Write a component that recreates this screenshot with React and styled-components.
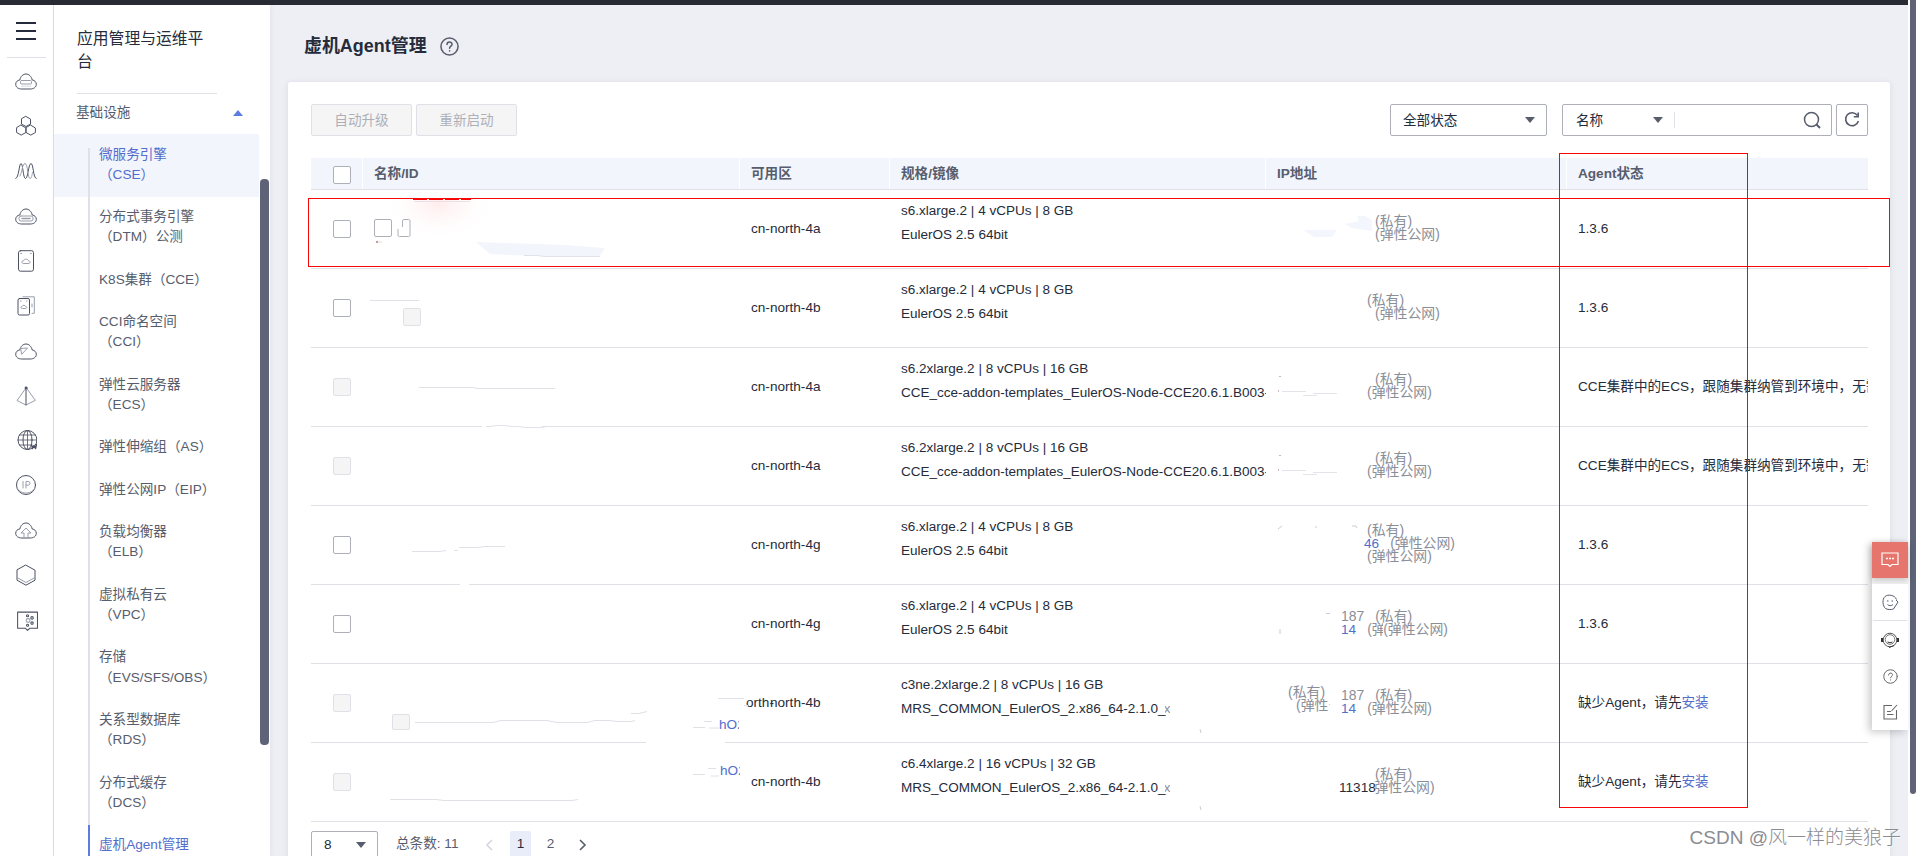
import React from "react";
import styled, { createGlobalStyle, css } from "styled-components";

const GlobalStyle = createGlobalStyle`
  * { box-sizing: border-box; }
  body {
    margin: 0;
    overflow: hidden;
    font-family: "Liberation Sans", "Noto Sans CJK SC", sans-serif;
    font-size: 13.6px;
    color: #252b3a;
  }
`;

/* ---------- shell ---------- */
const Screen = styled.div`
  display: flex;
  width: 1916px;
  height: 856px;
  overflow: hidden;
  background: #fff;
`;
const Frame = styled.div`
  position: relative;
  display: flex;
  flex-direction: column;
  width: 1908px;
  height: 856px;
`;
const TopBar = styled.header`
  flex: none;
  height: 5px;
  background: #282b33;
`;
const Body = styled.div`
  display: flex;
  flex: 1;
  min-height: 0;
`;
const PageScroll = styled.div`
  width: 8px;
  padding-left: 2px;
`;
const PageThumb = styled.div`
  height: 794px;
  background: #5e6378;
  border-radius: 0 0 4px 4px;
`;

/* ---------- icon rail ---------- */
const Rail = styled.nav`
  width: 54px;
  flex: none;
  border-right: 1px solid #dfe1e6;
  background: #fff;
  display: flex;
  flex-direction: column;
`;
const MenuButton = styled.div`
  height: 53px;
  margin: 0 7px;
  padding: 17px 0 0 9px;
  border-bottom: 1px solid #dfe1e6;
  svg { display: block; }
`;
const RailItem = styled.div`
  height: 44.95px;
  display: flex;
  align-items: center;
  justify-content: center;
  padding-right: 1px;
  svg { display: block; }
`;
const RailList = styled.div`
  padding-top: 0.5px;
`;

/* ---------- side navigation ---------- */
const Side = styled.aside`
  position: relative;
  z-index: 1;
  width: 216px;
  flex: none;
  display: flex;
  background: #fff;
  box-shadow: 1px 0 5px rgba(60, 70, 100, 0.07);
`;
const SideMain = styled.div`
  width: 205px;
  height: 851px;
  overflow: hidden;
`;
const SideTitle = styled.h2`
  margin: 0 42px 0 23px;
  padding: 23px 0 0;
  height: 89px;
  font-size: 15.8px;
  font-weight: 400;
  line-height: 22.5px;
  border-bottom: 1px solid #dfe1e6;
`;
const Group = styled.div`
  height: 40px;
  padding: 0 16px 3px 22px;
  display: flex;
  align-items: center;
  justify-content: space-between;
  color: #575d6c;
`;
const GroupName = styled.span`
  padding-bottom: 4px;
`;
const CaretUp = styled.i`
  border: 5px solid transparent;
  border-top: 0;
  border-bottom: 6px solid #5e7ce0;
`;
const NavItem = styled.div`
  padding: 0 0 0 34px;
  background: ${(p) => (p.$hover ? "#f2f5fc" : "transparent")};
  color: ${(p) => (p.$hover || p.$current ? "#526ecc" : "#575d6c")};
`;
const NavLabel = styled.div`
  position: relative;
  padding: 10.6px 0 11.7px 9px;
  border-left: 2px solid ${(p) => (p.$current ? "#5e7ce0" : "#dfe1e6")};
  line-height: 20.15px;
  white-space: pre;
  ${(p) =>
    p.$first &&
    css`
      border-left-color: transparent;
      border-image: linear-gradient(transparent 14px, #dfe1e6 14px) 1;
    `}
`;
const SideScroll = styled.div`
  width: 11px;
  padding: 174px 1px 0;
`;
const SideThumb = styled.div`
  height: 566px;
  border-radius: 4px;
  background: #5e6378;
`;

/* ---------- content ---------- */
const Content = styled.main`
  flex: 1;
  background: #eeeff5;
  padding: 0 18px;
`;
const PageHead = styled.div`
  height: 77px;
  display: flex;
  align-items: center;
  gap: 13.5px;
  padding: 5px 0 0 16px;
`;
const PageTitle = styled.h1`
  margin: 0;
  font-size: 17.95px;
  line-height: 26px;
  font-weight: 700;
`;
const Card = styled.section`
  position: relative;
  height: 800px;
  padding: 22px 22px 0 23px;
  background: #fff;
  border-radius: 3px;
  box-shadow: 0 1px 6px rgba(40, 50, 80, 0.1);
`;
const Toolbar = styled.div`
  display: flex;
  height: 32px;
`;
const DisabledButton = styled.button`
  width: 101px;
  height: 32px;
  margin-right: 4px;
  padding: 0 0 2px;
  border: 1px solid #dfe1e6;
  border-radius: 2px;
  background: #f5f5f6;
  color: #adb0b8;
  font: inherit;
`;
const Spacer = styled.div`
  flex: 1;
`;
const SelectBox = styled.div`
  width: ${(p) => p.$w}px;
  height: 32px;
  padding: 0 11px 0 12px;
  display: flex;
  align-items: center;
  justify-content: space-between;
  border: 1px solid #adb0b8;
  border-radius: 2px;
`;
const SelectText = styled.span`
  padding-bottom: 2px;
`;
const SearchBox = styled.div`
  display: flex;
  align-items: center;
  width: 270px;
  height: 32px;
  margin: 0 4px 0 15px;
  padding: 0 10px 0 13px;
  border: 1px solid #adb0b8;
  border-radius: 2px;
`;
const SearchField = styled.div`
  display: flex;
  justify-content: space-between;
  align-items: center;
  width: 99px;
  height: 16px;
  padding-right: 11px;
  border-right: 1px solid #dfe1e6;
`;
const IconButton = styled.div`
  width: 32px;
  height: 32px;
  display: flex;
  align-items: center;
  justify-content: center;
  border: 1px solid #adb0b8;
  border-radius: 2px;
`;
const Caret = styled.i`
  border: 5px solid transparent;
  border-bottom: 0;
  border-top: 6px solid #575d6c;
`;

/* ---------- table ---------- */
const columns = "52px 377px 150px 376px 301px 301px";
const Table = styled.div`
  position: relative;
  margin-top: 22px;
`;
const HeadRow = styled.div`
  display: grid;
  grid-template-columns: ${columns};
  height: 32px;
  background: #f2f5fc;
  border-bottom: 1px solid #dfe1e6;
`;
const HeadCell = styled.div`
  padding: 0 0 0 11px;
  border-right: ${(p) => (p.$last ? 0 : 1)}px solid #fff;
  line-height: 31px;
  font-weight: 700;
  color: #575d6c;
`;
const CheckCell = styled.div`
  display: flex;
  align-items: center;
  padding-left: 22px;
  border-right: ${(p) => (p.$head ? "1px solid #fff" : "0")};
  padding-top: ${(p) => (p.$head ? 2 : 0)}px;
`;
const Checkbox = styled.span`
  flex: none;
  width: 18px;
  height: 18px;
  border: 1px solid ${(p) => (p.$off ? "#dfe1e6" : "#adb0b8")};
  border-radius: 2px;
  background: ${(p) => (p.$off ? "#f5f5f6" : "#fff")};
`;
const Row = styled.div`
  display: grid;
  grid-template-columns: ${columns};
  height: 79px;
  border-bottom: 1px solid #dfe1e6;
`;
const Cell = styled.div`
  min-width: 0;
  overflow: hidden;
  padding-left: 11px;
  line-height: 77px;
  white-space: nowrap;
`;
const ZoneCell = styled(Cell)`
  overflow: visible;
`;
const ZoneLead = styled.span`
  margin: 0 -4px 0 -5px;
`;
const NameCell = styled(Cell)`
  display: flex;
  justify-content: flex-end;
  padding-right: ${(p) => p.$right}px;
`;
const NameFragment = styled.span`
  width: 20px;
  overflow: hidden;
  height: 20px;
  margin-top: ${(p) => p.$top}px;
  line-height: 20px;
  color: #526ecc;
`;
const SpecCell = styled(Cell)`
  padding-top: 8.5px;
  line-height: 24px;
  font-size: 13.52px;
`;
const ClippedGlyph = styled.span`
  display: inline-block;
  width: 5px;
  height: 14px;
  line-height: 14px;
  overflow: hidden;
  vertical-align: middle;
  direction: rtl;
  color: #8a8e99;
`;
const IpCell = styled.div`
  position: relative;
  padding-top: ${(p) => (p.$lines > 2 ? 18 : 25)}px;
  color: #8a8e99;
`;
const IpLine = styled.div`
  display: flex;
  height: 13px;
  line-height: 13px;
  white-space: pre;
`;
const IpPart = styled.span`
  margin-left: ${(p) => p.$ml || 0}px;
  font-size: ${(p) => (p.$tone ? 13.6 : 13.9)}px;
  color: ${(p) => (p.$tone === "link" ? "#526ecc" : p.$tone === "dark" ? "#252b3a" : "#8a8e99")};
  ${(p) => p.$w && css`width: ${p.$w}px; overflow: hidden; height: 16px;`}
  ${(p) => p.$clipLeft && css`clip-path: inset(-2px -2px -2px 5px);`}
`;
const IpExtra = styled.div`
  position: absolute;
  left: 22px;
  top: 22px;
`;
const Install = styled.a`
  color: #526ecc;
`;
const Traces = styled.svg`
  position: absolute;
  left: 0;
  top: 0;
  pointer-events: none;
`;

/* ---------- pagination ---------- */
const Pager = styled.div`
  display: flex;
  margin-top: 9px;
  height: 26px;
  line-height: 26px;
  color: #575d6c;
`;
const PageSize = styled.div`
  display: flex;
  align-items: center;
  justify-content: space-between;
  width: 67px;
  height: 28px;
  padding: 0 11px 0 12px;
  border: 1px solid #adb0b8;
  border-radius: 2px;
  color: #252b3a;
`;
const Total = styled.span`
  margin-left: 18px;
  width: 81px;
`;
const PageNo = styled.span`
  width: 21px;
  margin-left: ${(p) => p.$ml}px;
  border-radius: 2px;
  text-align: center;
  background: ${(p) => (p.$on ? "#e9edfa" : "transparent")};
  color: ${(p) => (p.$on ? "#252b3a" : "#575d6c")};
`;
const Chevron = styled.svg`
  margin: 8px 0 0 ${(p) => p.$ml}px;
`;

/* ---------- overlays ---------- */
const Marker = styled.div`
  position: absolute;
  left: ${(p) => p.$x}px;
  top: ${(p) => p.$y}px;
  width: ${(p) => p.$w}px;
  height: ${(p) => p.$h}px;
  border: 1px solid #f80606;
  z-index: 2;
`;
const FloatBar = styled.div`
  position: absolute;
  right: 0;
  top: 542px;
  width: 36px;
  z-index: 3;
  box-shadow: -3px 2px 8px rgba(0, 0, 0, 0.22);
  background: #f1f1f2;
`;
const FloatChat = styled.div`
  height: 36px;
  margin-bottom: 6px;
  display: flex;
  align-items: center;
  justify-content: center;
  background: #e6766d;
  box-shadow: 0 2px 6px rgba(0, 0, 0, 0.18);
`;
const FloatList = styled.div`
  position: relative;
  height: 146px;
  padding: 0 1px;
  background: #fff;
`;
const FloatItem = styled.div`
  height: 36px;
  display: flex;
  align-items: center;
  justify-content: center;
  border-bottom: ${(p) => (p.$line ? "1px solid #dfe1e6" : "0")};
  ${(p) => p.$line && css`height: 37px; margin-bottom: 1px;`}
`;
const Watermark = styled.div`
  position: absolute;
  right: 7px;
  top: 823px;
  z-index: 4;
  font-size: 19px;
  line-height: 30px;
  font-weight: 300;
  white-space: nowrap;
  color: #8b8c91;
  text-shadow: 1px 1px 0 rgba(255, 255, 255, 0.7);
`;

/* ---------- icons ---------- */
const CLOUD = "M6.500 19C3 19 .7 17 .7 14.300c0-2.400 1.700-4 4.100-4.300C5.500 6.500 8 4 11 4s5.500 2.500 6.200 6c2.400.3 4.100 1.900 4.100 4.300 0 2.700-2.300 4.700-5.800 4.700z";
function Ico({ children, size = 22, color = "#4b5162", sw = 1 }) {
  return (
    <svg width={size} height={size} viewBox="0 0 22 22" fill="none" stroke={color} strokeWidth={sw} strokeLinejoin="round" strokeLinecap="round">
      {children}
    </svg>
  );
}
const faint = "#9a9eab";
const railIcons = [
  <Ico><path d={CLOUD} /><rect x="5.500" y="10.500" width="11" height="3.500" rx="1" stroke={faint} /><path d="M6 15.500h10v1.500H6z" stroke="none" fill="#e4e5ea" /></Ico>,
  <Ico><path d="M11 1.500l4.500 2.600v5L11 11.500 6.500 9.100v-5z" /><path d="M6.200 10.200L10.900 13v4.500l-4.700 2.600L1.600 17.500V13z" /><path d="M15.800 10.200l4.600 2.800v4.500l-4.600 2.600-4.800-2.600V13z" /></Ico>,
  <Ico><path d="M.8 18.500C4 18 4 3.500 6 3.500S8 18.500 10.500 18.500 13.500 3.500 16 3.500 18 18 21.200 18.500" /><path d="M5 16C7 12 7.500 3.500 10 3.500c3 0 2.500 15 5 15 1.500 0 2-3 2.500-6" stroke={faint} /></Ico>,
  <Ico><path d={CLOUD} /><rect x="4" y="11" width="14" height="5" rx="2" stroke={faint} /><path d="M7 13.500h8" stroke={faint} strokeWidth={1.5} /></Ico>,
  <Ico><rect x="3.500" y=".7" width="15" height="20.500" rx="2" /><path d="M8.500 13.500c-3-.2-1.500-3.200 0-2.700.8-2.200 4.500-2.200 5 0 2 0 2.500 2.700 0 2.700z" stroke={faint} /><path d="M6 3.500h.2M15.800 3.500h.2" sw={2} /></Ico>,
  <Ico><rect x="3" y="3.500" width="11.500" height="16.500" rx="1.500" /><path d="M8 1.800h11.300v16.500H17" stroke={faint} /><path d="M7 13.500c-2-.2-1-2.300 0-2 .6-1.600 3.200-1.600 3.600 0 1.500 0 1.700 2 0 2zM5.500 6h.6M11.500 6h.6M17 9v3" stroke={faint} /></Ico>,
  <Ico><path d={CLOUD} /><path d="M6 8.500l6.500-.5-5.500 6z" stroke={faint} /></Ico>,
  <Ico><path d="M11 3L2 15.500l9 4.500 9-4.500z" stroke={faint} /><path d="M11 2v18" /><circle cx="11" cy="3" r="1" fill="#4b5162" /></Ico>,
  <Ico><g transform="translate(1.500 0)"><circle cx="11" cy="11" r="9.500" /><ellipse cx="11" cy="11" rx="4.500" ry="9.500" /><path d="M1.500 11h19M11 1.500v19M3 6h16M3 16h11" strokeWidth=".8" /><path d="M15 15.500l1 4 1.500-3 1.500 3 1-4" strokeWidth={1.4} /></g></Ico>,
  <Ico><circle cx="11" cy="11" r="9.500" /><path d="M4 16.500c4 3.500 10 3.500 14 0" stroke={faint} /><path d="M8 7.500v6.500M11 14V7.500h2.200a1.800 1.800 0 010 3.600H11" stroke={faint} /></Ico>,
  <Ico><path d={CLOUD} /><path d="M9 18.500v-4.500H6L11 9l5 5h-3v4.500" stroke={faint} /></Ico>,
  <Ico><path d="M11 1.200l9 5v10l-9 5-9-5v-10z" /><path d="M2 13.500l9 5 9-5" stroke={faint} /></Ico>,
  <Ico size={23}><path d="M2.500 3h19v15.500h-7.500l-2 2-2-2H2.500z" /><circle cx="12.500" cy="11" r="1.800" stroke={faint} /><circle cx="12" cy="6.500" r="1" /><circle cx="12" cy="15.500" r="1" /><circle cx="16.300" cy="8.500" r="1.200" /><circle cx="16.300" cy="13.500" r="1.200" /></Ico>,
];

function HelpIcon({ size, color, sw }) {
  return (
    <svg width={size} height={size} viewBox="0 0 20 20" fill="none" stroke={color} strokeWidth={sw} strokeLinecap="round">
      <circle cx="10" cy="10" r="9" />
      <path d="M7.400 8c0-3.600 5.300-3.400 5.300-.3 0 1.900-2.600 2-2.600 4.100M10.100 14.500v.2" />
    </svg>
  );
}

/* ---------- data ---------- */
const nav = [
  "微服务引擎\n（CSE）",
  "分布式事务引擎\n（DTM）公测",
  "K8S集群（CCE）",
  "CCI命名空间\n（CCI）",
  "弹性云服务器\n（ECS）",
  "弹性伸缩组（AS）",
  "弹性公网IP（EIP）",
  "负载均衡器\n（ELB）",
  "虚拟私有云\n（VPC）",
  "存储\n（EVS/SFS/OBS）",
  "关系型数据库\n（RDS）",
  "分布式缓存\n（DCS）",
  "虚机Agent管理",
];

const PRIV = "(私有)";
const EIP = "(弹性公网)";
const managed = "CCE集群中的ECS，跟随集群纳管到环境中，无需安装";
const missing = <>缺少Agent，请先<Install>安装</Install></>;
const cceImage = "CCE_cce-addon-templates_EulerOS-Node-CCE20.6.1.B003-x86";

const rows = [
  { zone: "cn-north-4a", spec: "s6.xlarge.2 | 4 vCPUs | 8 GB", image: "EulerOS 2.5 64bit", status: "1.3.6",
    ip: [[{ t: PRIV, ml: 109 }], [{ t: EIP, ml: 109 }]] },
  { zone: "cn-north-4b", spec: "s6.xlarge.2 | 4 vCPUs | 8 GB", image: "EulerOS 2.5 64bit", status: "1.3.6",
    ip: [[{ t: PRIV, ml: 101 }], [{ t: EIP, ml: 109 }]] },
  { off: true, zone: "cn-north-4a", spec: "s6.2xlarge.2 | 8 vCPUs | 16 GB", image: cceImage, status: managed,
    ip: [[{ t: PRIV, ml: 109 }], [{ t: EIP, ml: 101 }]] },
  { off: true, zone: "cn-north-4a", spec: "s6.2xlarge.2 | 8 vCPUs | 16 GB", image: cceImage, status: managed,
    ip: [[{ t: PRIV, ml: 109 }], [{ t: EIP, ml: 101 }]] },
  { zone: "cn-north-4g", spec: "s6.xlarge.2 | 4 vCPUs | 8 GB", image: "EulerOS 2.5 64bit", status: "1.3.6",
    ip: [[{ t: PRIV, ml: 101 }], [{ t: "46", ml: 98, tone: "link" }, { t: EIP, ml: 11 }], [{ t: EIP, ml: 101 }]] },
  { zone: "cn-north-4g", spec: "s6.xlarge.2 | 4 vCPUs | 8 GB", image: "EulerOS 2.5 64bit", status: "1.3.6",
    ip: [[{ t: "187", ml: 75 }, { t: PRIV, ml: 11 }], [{ t: "14", ml: 75, tone: "link" }, { t: "(弹", ml: 11, w: 16 }, { t: EIP, ml: 0 }]] },
  { off: true, fragment: { top: 51, right: 1 }, zoneLead: "orth-", zone: "north-4b", spec: "c3ne.2xlarge.2 | 8 vCPUs | 16 GB", image: "MRS_COMMON_EulerOS_2.x86_64-2.1.0_", tail: true, status: missing,
    extra: true,
    ip: [[{ t: "187", ml: 75 }, { t: PRIV, ml: 11 }], [{ t: "14", ml: 75, tone: "link" }, { t: EIP, ml: 11 }]] },
  { off: true, fragment: { top: 18, right: 0 }, zone: "cn-north-4b", spec: "c6.4xlarge.2 | 16 vCPUs | 32 GB", image: "MRS_COMMON_EulerOS_2.x86_64-2.1.0_", tail: true, status: missing,
    ip: [[{ t: PRIV, ml: 109 }], [{ t: "11318", ml: 73, tone: "dark" }, { t: EIP, ml: -6, clipLeft: true }]] },
];

/* Leftover strokes across the redacted cells; coordinates are relative to the table. */
function RedactionTraces() {
  return (
    <Traces width="1557" height="665" fill="none">
      <defs>
        <radialGradient id="blush"><stop offset="0" stopColor="#ffecec" /><stop offset="1" stopColor="#fff" stopOpacity="0" /></radialGradient>
        <clipPath id="rowClip"><rect x="0" y="41" width="400" height="69" /></clipPath>
      </defs>
      <ellipse cx="128" cy="45" rx="58" ry="38" fill="url(#blush)" clipPath="url(#rowClip)" />
      <path d="M102 41.200h58" stroke="#f80606" strokeWidth="1.600" strokeDasharray="14 2" />
      <path d="M103 43.500h56" stroke="#ebe0e6" />
      <rect x="63.500" y="61.500" width="17" height="17" rx="1.500" stroke="#adb0b8" />
      <path d="M91.500 69v-6q0-1.500 1.500-1.500h4.500q1.500 0 1.500 1.500v14q0 1.500-1.500 1.500h-9q-1.500 0-1.500-1.500v-6" stroke="#adb0b8" />
      <path d="M65 84h2" stroke="#a33" /><path d="M67 84h4" stroke="#ddd" />
      <path d="M165 84l31 1 58 2 40 3-5 8h-60l-30-1-20-1z" fill="#f3f5fc" />
      <path d="M213 97.500h14l6 1h56" stroke="#e0e3ec" />
      <g stroke="#dfe1e6">
        <path d="M59 142.500h49M108 229.500h54l4 1h78" />
        <path d="M101 393.500h28l6-1M143 392.500h4M148 389.500h18l8-1h20" />
        <path d="M104 564.500h78l8-2h46l10 2h30l8-2h14l8 1h14l4-1" />
        <path d="M320 555.500h8l8-2M407 540.500h26M382 569.500h12M393 563.500h8M398 570h10M382 616.500h12M397 610.500h8M400 618h8" />
        <path d="M79 641.500h46l8 1h128l6-1" />
        <path d="M433 547.500h4" />
      </g>
      <path d="M171 268.500h60M149 426.500h9M335 584.500h79" stroke="#fff" strokeWidth="2" />
      <path d="M175 268.500h4l6-1h8l8 1h6l8 1h16l4-1" stroke="#e1e3e8" />
      <rect x="92.500" y="150.500" width="17" height="17" rx="1.500" fill="#f5f5f6" stroke="#dfe1e6" />
      <rect x="81.500" y="556.500" width="17" height="15" rx="1.500" fill="#f5f5f6" stroke="#dfe1e6" />
      <path d="M992 72h34l-5 7h-18zM1034 66l14-3-2-5h8l7 4v11l-20-3z" fill="#f3f6fc" />
      {[213, 292].map((y) => (
        <g key={y}>
          <path d={`M968 ${y + 5.5}h2M967.500 ${y + 19}v2`} stroke="#cbbcbc" />
          <path d={`M971 ${y + 20.5}h24M992 ${y + 24.5}h14M1002 ${y + 22.5}h24`} stroke="#e4e5ea" />
        </g>
      ))}
      <path d="M967 371l4-3M1041 368h4l1 2M1005 368v2M1015 455.500h4M969 471v5M889 571l1 4M889 648l1 4" stroke="#cdcad3" />
    </Traces>
  );
}

function TableRow({ r }) {
  return (
    <Row>
      <CheckCell><Checkbox $off={r.off} /></CheckCell>
      <NameCell $right={r.fragment ? r.fragment.right : 0}>
        {r.fragment && <NameFragment $top={r.fragment.top}>hO2</NameFragment>}
      </NameCell>
      <ZoneCell>
        {r.zoneLead && <ZoneLead>{r.zoneLead}</ZoneLead>}
        {r.zone}
      </ZoneCell>
      <SpecCell>
        <div>{r.spec}</div>
        <div>{r.image}{r.tail && <ClippedGlyph>x</ClippedGlyph>}</div>
      </SpecCell>
      <IpCell $lines={r.ip.length}>
        {r.ip.map((line, i) => (
          <IpLine key={i}>
            {line.map((p, j) => (
              <IpPart key={j} $ml={p.ml} $tone={p.tone} $w={p.w} $clipLeft={p.clipLeft}>{p.t}</IpPart>
            ))}
          </IpLine>
        ))}
        {r.extra && (
          <IpExtra>
            <IpLine><IpPart>{PRIV}</IpPart></IpLine>
            <IpLine><IpPart $ml={8} $w={34}>{EIP}</IpPart></IpLine>
          </IpExtra>
        )}
      </IpCell>
      <Cell>{r.status}</Cell>
    </Row>
  );
}

export default function App() {
  return (
    <Screen>
      <GlobalStyle />
      <Frame>
        <TopBar />
        <Body>
          <Rail>
            <MenuButton>
              <svg width="20" height="18" fill="#252b3a"><path d="M0 0h20v2H0zM0 8h20v2H0zM0 16h20v2H0z" /></svg>
            </MenuButton>
            <RailList>
              {railIcons.map((icon, i) => <RailItem key={i}>{icon}</RailItem>)}
            </RailList>
          </Rail>
          <Side>
            <SideMain>
              <SideTitle>应用管理与运维平台</SideTitle>
              <Group><GroupName>基础设施</GroupName><CaretUp /></Group>
              {nav.map((n, i) => (
                <NavItem key={n} $hover={i === 0} $current={i === nav.length - 1}>
                  <NavLabel $first={i === 0} $current={i === nav.length - 1}>{n}</NavLabel>
                </NavItem>
              ))}
            </SideMain>
            <SideScroll><SideThumb /></SideScroll>
          </Side>
          <Content>
            <PageHead>
              <PageTitle>虚机Agent管理</PageTitle>
              <HelpIcon size={19} color="#575d6c" sw={1.6} />
            </PageHead>
            <Card>
              <Toolbar>
                <DisabledButton>自动升级</DisabledButton>
                <DisabledButton>重新启动</DisabledButton>
                <Spacer />
                <SelectBox $w={157}><SelectText>全部状态</SelectText><Caret /></SelectBox>
                <SearchBox>
                  <SearchField><SelectText>名称</SelectText><Caret /></SearchField>
                  <Spacer />
                  <svg width="18" height="18" viewBox="0 0 18 18" fill="none" stroke="#575d6c" strokeWidth="1.500"><circle cx="8.500" cy="8.500" r="7" /><path d="M13.500 13.500l3.500 3.500" strokeWidth="2" /></svg>
                </SearchBox>
                <IconButton>
                  <svg width="16" height="18" viewBox="0 0 16 18" fill="none" stroke="#575d6c" strokeWidth="1.600"><path d="M13.500 4.500A6.500 6.500 0 1 0 14.400 10" /><path d="M14.200 1.500v4.300H9.800" /></svg>
                </IconButton>
              </Toolbar>
              <Table>
                <HeadRow>
                  <CheckCell $head><Checkbox /></CheckCell>
                  <HeadCell>名称/ID</HeadCell>
                  <HeadCell>可用区</HeadCell>
                  <HeadCell>规格/镜像</HeadCell>
                  <HeadCell>IP地址</HeadCell>
                  <HeadCell $last>Agent状态</HeadCell>
                </HeadRow>
                {rows.map((r, i) => <TableRow key={i} r={r} />)}
                <RedactionTraces />
              </Table>
              <Pager>
                <PageSize>8<Caret /></PageSize>
                <Total>总条数: 11</Total>
                <Chevron $ml={8} width="8" height="12" fill="none" stroke="#d5d7de" strokeWidth="1.600"><path d="M7 1L2 6l5 5" /></Chevron>
                <PageNo $on $ml={17}>1</PageNo>
                <PageNo $ml={9}>2</PageNo>
                <Chevron $ml={18} width="8" height="12" fill="none" stroke="#575d6c" strokeWidth="1.600"><path d="M1 1l5 5-5 5" /></Chevron>
              </Pager>
            </Card>
          </Content>
        </Body>
        <Marker $x={308} $y={198} $w={1582} $h={69} />
        <Marker $x={1559} $y={153} $w={189} $h={655} />
        <FloatBar>
          <FloatChat>
            <svg width="18" height="16" fill="none" stroke="#fff" strokeWidth="1.200"><path d="M1 1h16v11.500h-6l-2 2-2-2H1z" /><path d="M5 6.500h2M8 6.500h2M11 6.500h2" strokeWidth="1.600" /></svg>
          </FloatChat>
          <FloatList>
            <FloatItem $line>
              <svg width="17" height="17" fill="none" stroke="#575d6c" strokeWidth="1"><path d="M14.500 5.500C13 1 6 0 3 2.500S.5 12 3.500 14.500c1.500 1 5.500 1.500 8 .5l4.500-7-2-2M5.500 10.500c1.500 1.500 4 1.500 5.500 0M5 7h1.500M9.500 7H11" /></svg>
            </FloatItem>
            <FloatItem>
              <svg width="18" height="16" fill="none" stroke="#333" strokeWidth="1"><circle cx="9" cy="8" r="6.800" stroke="#555" /><circle cx="9" cy="7.500" r="4.800" stroke="#777" /><path d="M1 6v4M17 6v4" strokeWidth="2" /><path d="M6.500 10q2.500 1.500 5 0M8 15.500l5-2" /></svg>
            </FloatItem>
            <FloatItem><HelpIcon size={15} color="#666" sw={1.3} /></FloatItem>
            <FloatItem>
              <svg width="15" height="16" fill="none" stroke="#666" strokeWidth="1.100"><path d="M9 1.500H1v13.500h12.500V6M4 7.500h4M4 10.500h6.500M8.500 7L14 1" /></svg>
            </FloatItem>
          </FloatList>
        </FloatBar>
        <Watermark>CSDN @风一样的美狼子</Watermark>
      </Frame>
      <PageScroll><PageThumb /></PageScroll>
    </Screen>
  );
}
